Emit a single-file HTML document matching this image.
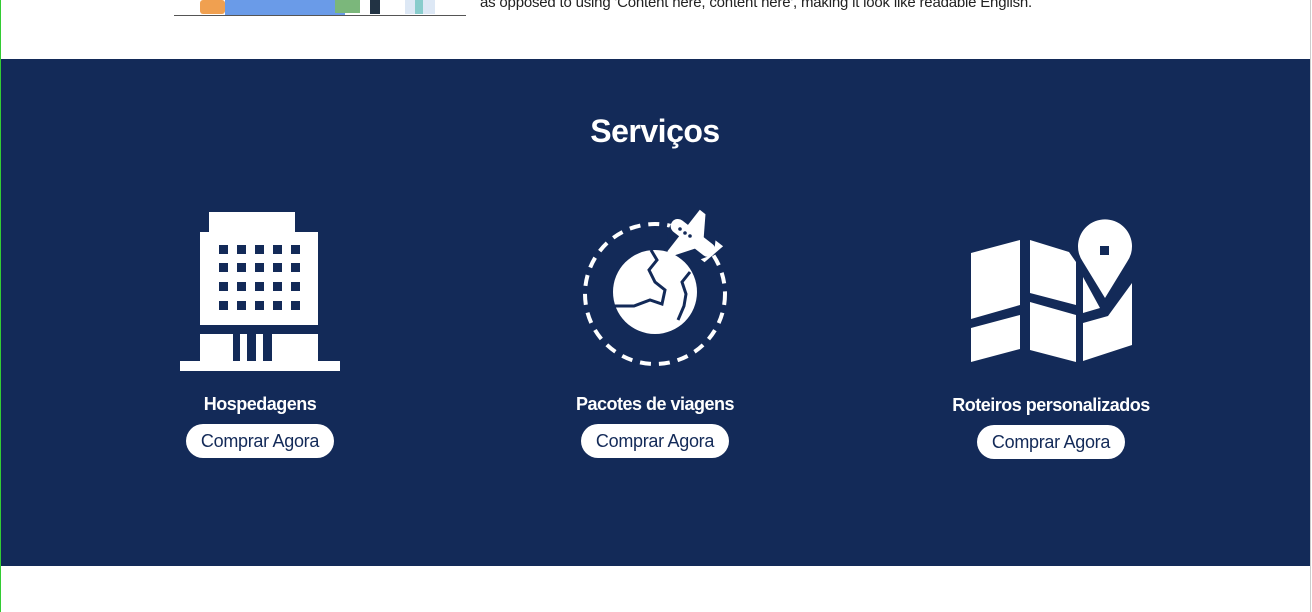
<!DOCTYPE html>
<html><head><meta charset="utf-8"><style>
*{margin:0;padding:0;box-sizing:border-box}
body{width:1312px;height:612px;background:#fff;position:relative;overflow:hidden;font-family:"Liberation Sans",sans-serif}
.gl{position:absolute;left:0;top:0;width:1px;height:612px;background:#3c3}
.band{position:absolute;left:1px;top:59px;width:1310px;height:507px;background:#132a58}
.rl{position:absolute;left:1310px;top:0;width:1px;height:612px;background:#ccc}
.top{position:absolute;left:480px;top:-6px;font-size:15px;color:#222;letter-spacing:-0.2px}
h2{position:absolute;left:0;width:1310px;top:113px;text-align:center;color:#fff;font-size:32px;font-weight:bold;letter-spacing:-0.5px}
.lbl{position:absolute;color:#fff;font-weight:bold;font-size:18px;text-align:center;width:300px;letter-spacing:-0.5px}
.btn{position:absolute;background:#fff;color:#132a58;font-size:18px;border-radius:17px;width:148px;height:34px;line-height:34px;text-align:center;letter-spacing:-0.3px}
svg{position:absolute}
</style></head><body>
<div class="gl"></div>
<svg style="left:170px;top:0" width="300" height="20" viewBox="0 0 300 20">
<rect x="55" y="0" width="120" height="15" fill="#6a9be8"/>
<rect x="30" y="0" width="25" height="14" fill="#f0a050" rx="3"/>
<rect x="165" y="0" width="25" height="13" fill="#7bb77b"/>
<rect x="200" y="0" width="10" height="14" fill="#234"/>
<rect x="235" y="0" width="30" height="14" fill="#dde8f5"/>
<rect x="245" y="0" width="8" height="14" fill="#8cc"/>
<rect x="4" y="15" width="292" height="1" fill="#555"/>
</svg>
<div class="top">as opposed to using 'Content here, content here', making it look like readable English.</div>
<div class="band"></div>
<div class="rl"></div>
<h2>Serviços</h2>
<svg style="left:0;top:0" width="1312" height="612">
<g fill="#fff">
<rect x="209" y="212" width="86" height="22"/>
<rect x="200" y="232" width="118" height="93"/>
<rect x="200" y="334" width="33" height="28"/>
<rect x="240" y="334" width="7" height="28"/>
<rect x="256" y="334" width="7" height="28"/>
<rect x="272" y="334" width="46" height="28"/>
<rect x="180" y="361" width="160" height="10"/>
</g>
<g fill="#132a58">
<g id="r"><rect x="219" y="245" width="9" height="9"/><rect x="237" y="245" width="9" height="9"/><rect x="255" y="245" width="9" height="9"/><rect x="273" y="245" width="9" height="9"/><rect x="291" y="245" width="9" height="9"/></g>
<use href="#r" y="18"/><use href="#r" y="37"/><use href="#r" y="56"/>
</g>
<circle cx="655" cy="294" r="70" fill="none" stroke="#fff" stroke-width="4" stroke-dasharray="11 8"/>
<circle cx="693" cy="238" r="26" fill="#132a58"/>
<circle cx="655" cy="292" r="42" fill="#fff"/>
<path d="M651 250 l6 10 -8 10 6 12 10 8 -3 14 -12 -4 -16 6 -22 0 M690 272 l-8 10 4 12 -2 12 -6 14" fill="none" stroke="#132a58" stroke-width="3"/>
<g transform="translate(693,238) rotate(38) scale(1.2)" fill="#fff">
<rect x="-22" y="-6" width="44" height="12" rx="6"/>
<path d="M-4 -22 L8 -4 8 4 -4 22 -10 22 -10 -22Z"/>
<path d="M16 -10 L22 0 16 10 20 10 24 -10Z"/>
</g>
<g fill="#132a58"><circle cx="680" cy="229" r="1.8"/><circle cx="685" cy="233" r="1.8"/><circle cx="690" cy="236" r="1.8"/></g>
<g fill="#fff">
<path d="M971 253 L1020 240 L1020 305 L971 319Z"/>
<path d="M971 328 L1020 315 L1020 349 L971 362Z"/>
<path d="M1030 240 L1069 252 L1076 262 L1076 305 L1030 293Z"/>
<path d="M1030 302 L1076 315 L1076 362 L1030 350Z"/>
<path d="M1083 277 L1100 308 L1083 313Z"/>
<path d="M1083 323 L1108 316 L1132 283 L1132 345 L1083 361Z"/>
<path d="M1105 298 L1083 262 A27 27 0 1 1 1127 262Z"/>
</g>
<rect x="1100" y="246" width="9" height="9" fill="#132a58"/>
</svg>
<div class="lbl" style="left:110px;top:394px">Hospedagens</div>
<div class="btn" style="left:186px;top:424px">Comprar Agora</div>
<div class="lbl" style="left:505px;top:394px">Pacotes de viagens</div>
<div class="btn" style="left:581px;top:424px">Comprar Agora</div>
<div class="lbl" style="left:901px;top:395px">Roteiros personalizados</div>
<div class="btn" style="left:977px;top:425px">Comprar Agora</div>
</body></html>
